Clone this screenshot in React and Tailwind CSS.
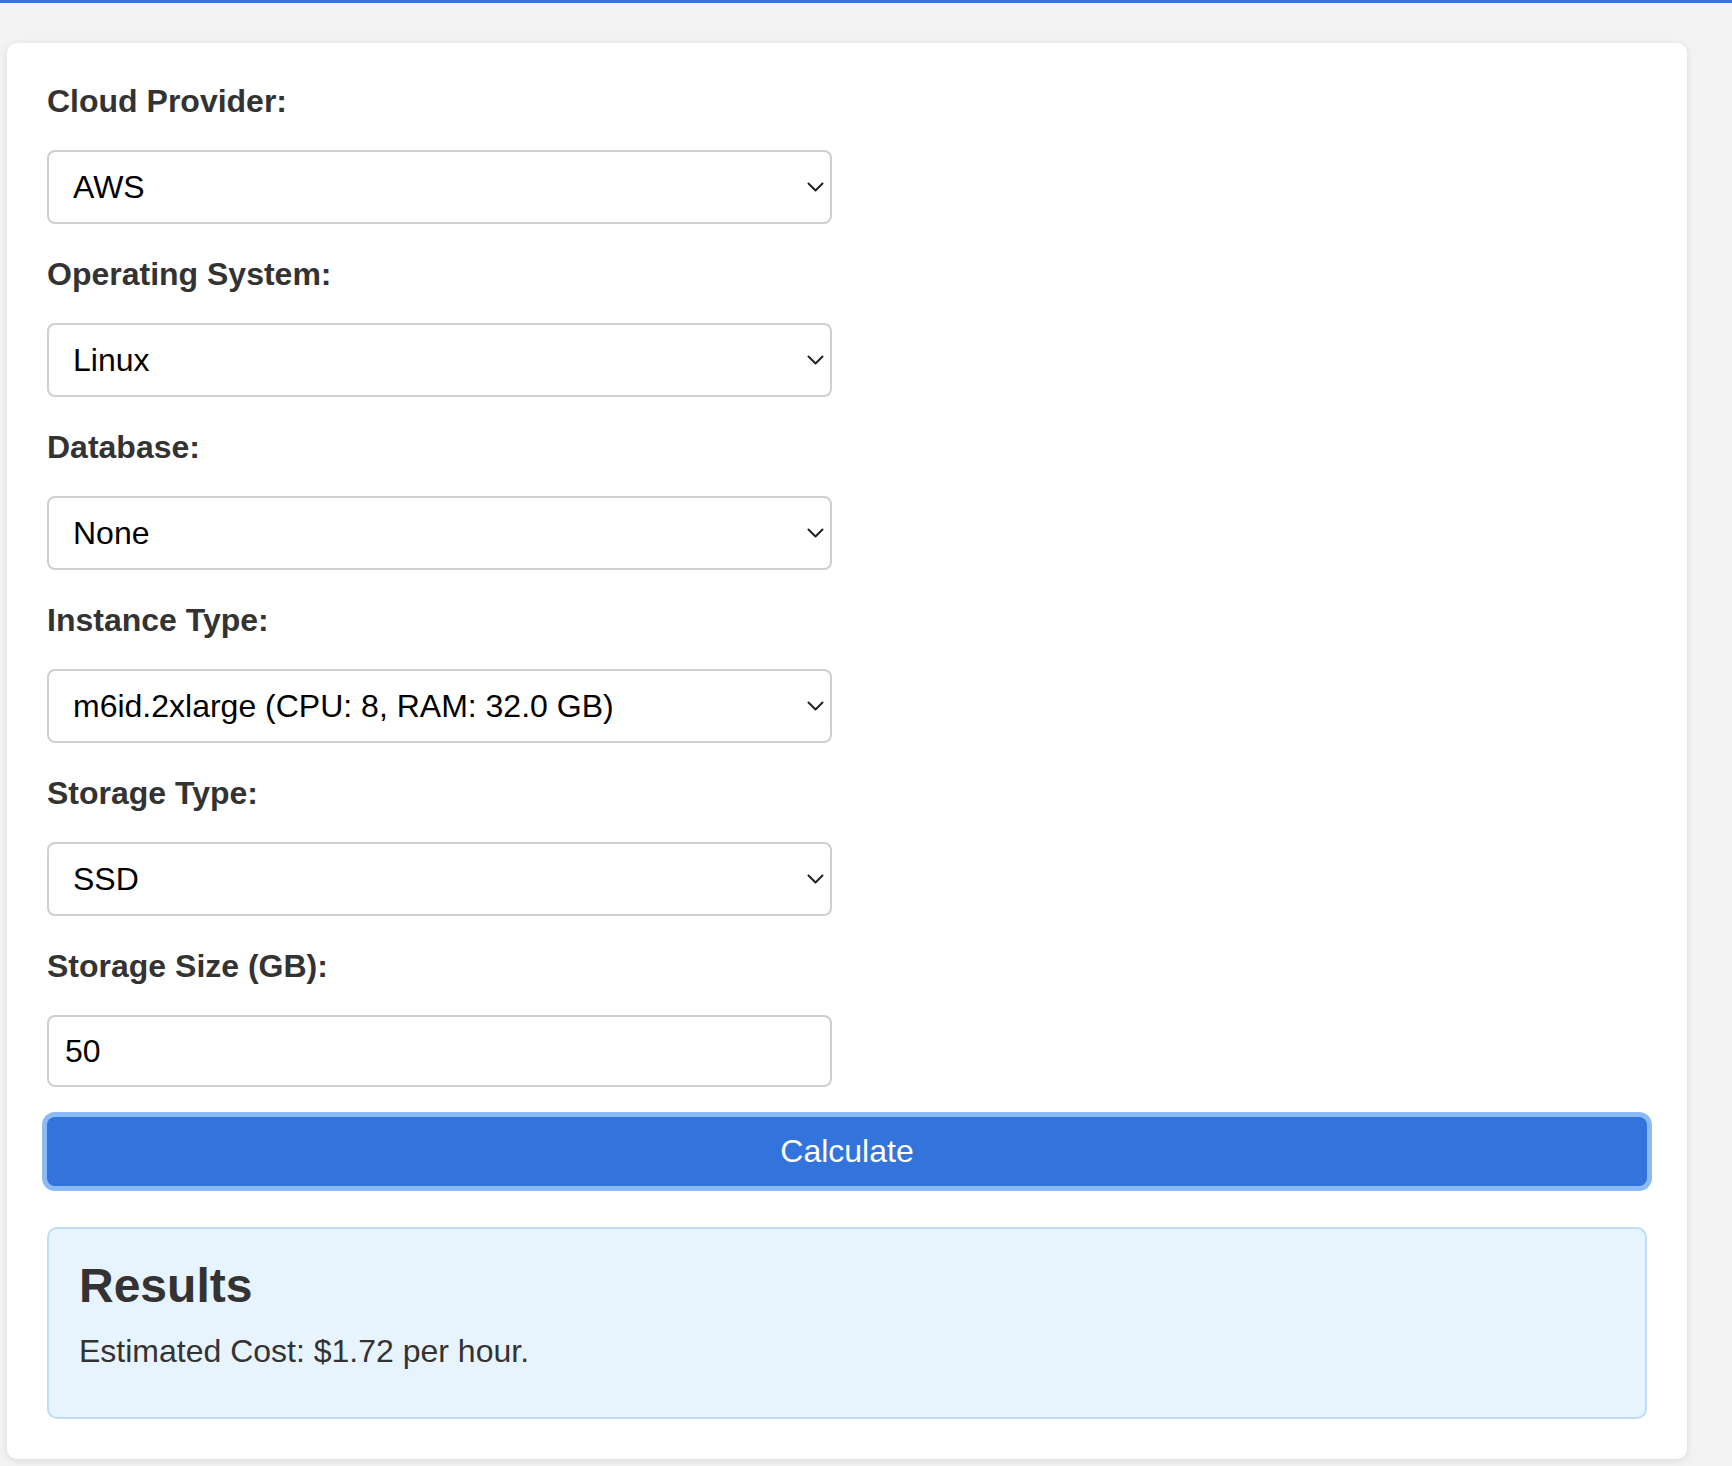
import { useState } from 'react';

const FIELDS = [
  { key: 'provider', label: 'Cloud Provider:', options: ['AWS', 'Azure', 'GCP'] },
  { key: 'os', label: 'Operating System:', options: ['Linux', 'Windows'] },
  { key: 'db', label: 'Database:', options: ['None', 'MySQL', 'PostgreSQL'] },
  {
    key: 'instance',
    label: 'Instance Type:',
    options: ['m6id.2xlarge (CPU: 8, RAM: 32.0 GB)', 't3.micro (CPU: 2, RAM: 1.0 GB)'],
  },
  { key: 'storage', label: 'Storage Type:', options: ['SSD', 'HDD'] },
];

function Chevron() {
  return (
    <svg
      className="pointer-events-none absolute right-[8px] top-1/2 -translate-y-1/2"
      width="17"
      height="10"
      viewBox="0 0 17 10"
      fill="none"
    >
      <path d="M1.5 1.5 L8.5 8.5 L15.5 1.5" stroke="#222" strokeWidth="2" strokeLinecap="round" strokeLinejoin="round" />
    </svg>
  );
}

function SelectField({ label, options, value, onChange }) {
  return (
    <div>
      <label className="block text-[32px] leading-[37px] font-bold text-[#333] mb-[30px]">{label}</label>
      <div className="relative w-[785px] mb-[32px]">
        <select
          value={value}
          onChange={e => onChange(e.target.value)}
          className="appearance-none w-full h-[74px] pl-[24px] pr-[40px] text-[32px] text-black bg-white border-2 border-[#cfcfcf] rounded-[8px] outline-none"
        >
          {options.map(o => (
            <option key={o}>{o}</option>
          ))}
        </select>
        <Chevron />
      </div>
    </div>
  );
}

export default function App() {
  const [form, setForm] = useState({
    provider: 'AWS',
    os: 'Linux',
    db: 'None',
    instance: 'm6id.2xlarge (CPU: 8, RAM: 32.0 GB)',
    storage: 'SSD',
  });
  const [size, setSize] = useState('50');

  return (
    <div className="min-h-[1466px] bg-[#f3f3f3] font-['Liberation_Sans',Arial,sans-serif]">
      <div className="h-[3px] bg-[#3273dc]" />
      <div className="ml-[7px] mt-[40px] w-[1680px] bg-white rounded-[10px] shadow-[0_2px_8px_rgba(0,0,0,0.1)] p-10">
        {FIELDS.map(f => (
          <SelectField
            key={f.key}
            label={f.label}
            options={f.options}
            value={form[f.key]}
            onChange={v => setForm({ ...form, [f.key]: v })}
          />
        ))}

        <label className="block text-[32px] leading-[37px] font-bold text-[#333] mb-[30px]">Storage Size (GB):</label>
        <input
          type="text"
          value={size}
          onChange={e => setSize(e.target.value)}
          className="block w-[785px] h-[72px] pl-[16px] text-[32px] text-black bg-white border-2 border-[#cfcfcf] rounded-[8px] outline-none"
        />

        <button className="block w-full h-[69px] mt-[30px] bg-[#3273dc] text-white text-[32px] leading-[37px] rounded-[8px] shadow-[0_0_0_5px_#8cbaf6]">
          Calculate
        </button>

        <div className="mt-[41px] h-[192px] bg-[#e8f4fd] border-2 border-[#bcdef9] rounded-[10px] px-[30px] pt-[29px]">
          <h2 className="text-[48px] leading-[55px] font-bold text-[#333] mb-[20px]">Results</h2>
          <p className="text-[32px] leading-[37px] text-[#333]">Estimated Cost: $1.72 per hour.</p>
        </div>
      </div>
    </div>
  );
}
